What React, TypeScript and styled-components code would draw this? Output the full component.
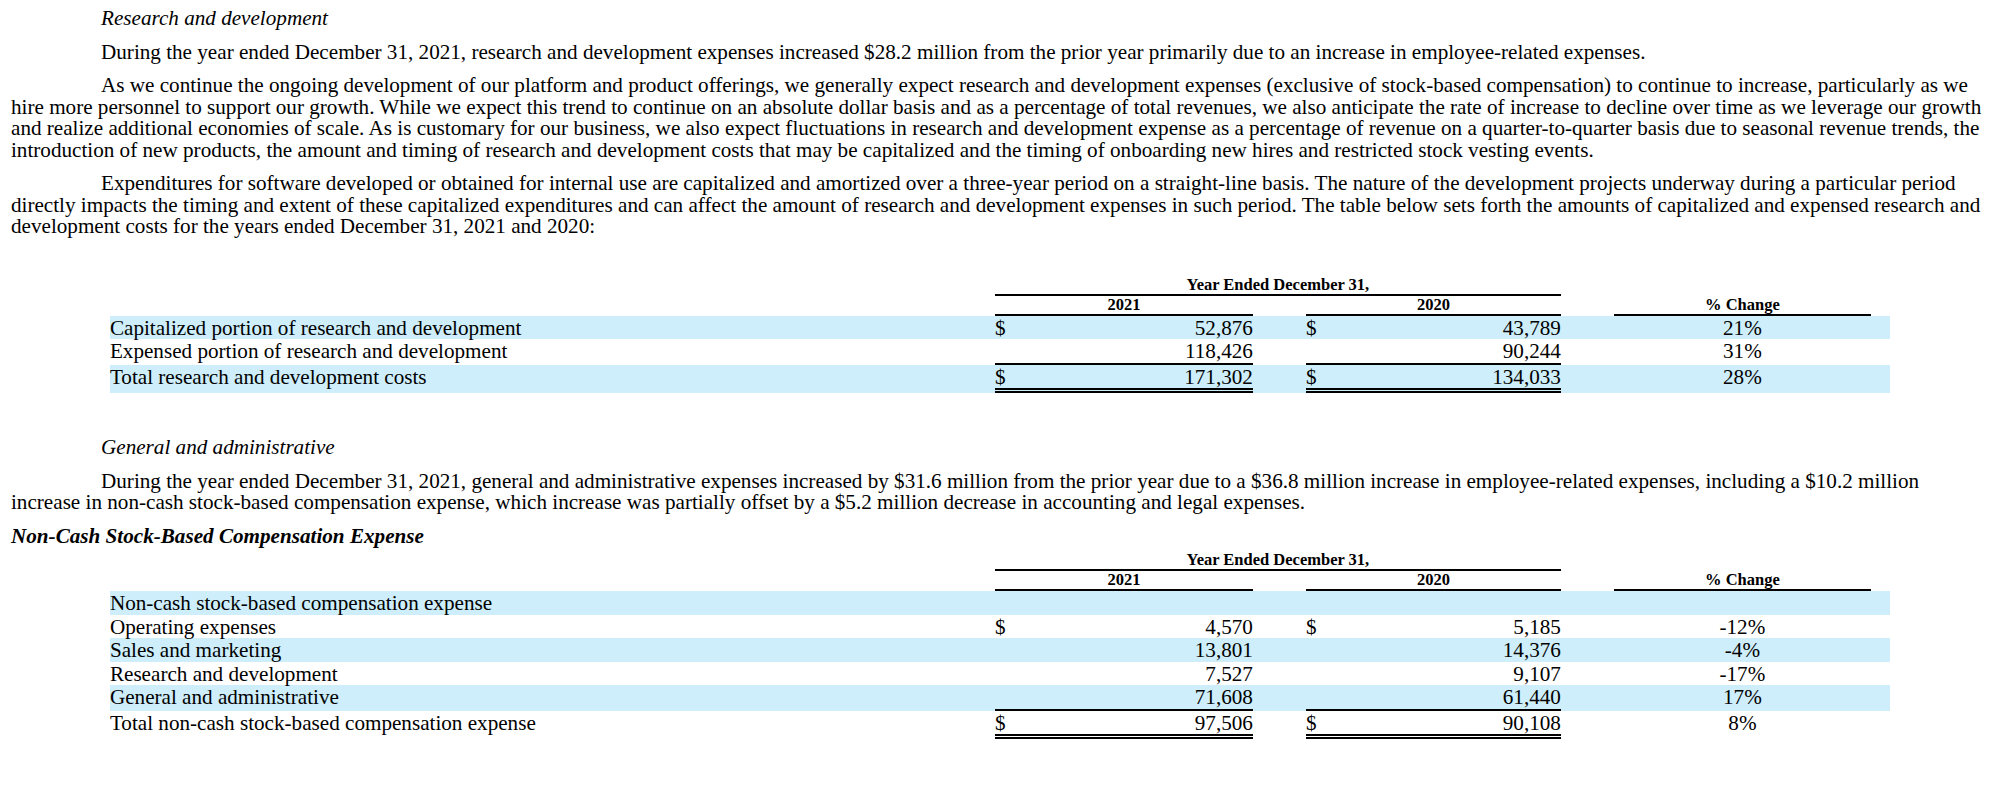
import React from 'react';
import styled, { createGlobalStyle } from 'styled-components';

const GlobalStyle = createGlobalStyle`
  html, body { margin: 0; padding: 0; background: #ffffff; }
  body { font-family: "Liberation Serif", "Times New Roman", Times, serif; color: #000000; }
  * { box-sizing: border-box; }
`;

const SHADE = '#cdeefa';
const COLS = '885px 258px 53px 255px 53px 257px 19px';
const BODY_SIZE = '21.15px';

const Page = styled.main`
  display: flex;
  flex-direction: column;
  width: 2000px;
  padding: 8px 11px 40px;
  font-size: ${BODY_SIZE};
  line-height: 21.5px;
`;

const SubHeading = styled.h3<{ $gap?: number }>`
  margin: ${(p) => p.$gap ?? 0}px 0 0;
  padding-left: 90px;
  font-size: ${BODY_SIZE};
  line-height: 21.5px;
  font-weight: normal;
  font-style: italic;
`;

const Paragraph = styled.p`
  margin: 12px 0 0;
  text-indent: 90px;
`;

const SectionTitle = styled.h2`
  margin: 12px 0 0;
  font-size: ${BODY_SIZE};
  line-height: 21.5px;
  font-weight: bold;
  font-style: italic;
`;

const Table = styled.div<{ $gap: number }>`
  width: 90%;
  align-self: center;
  margin-top: ${(p) => p.$gap}px;
`;

const Row = styled.div<{ $shaded?: boolean }>`
  display: grid;
  grid-template-columns: ${COLS};
  background: ${(p) => (p.$shaded ? SHADE : 'transparent')};
`;

const HeadCell = styled.div<{ $col: string }>`
  grid-column: ${(p) => p.$col};
  font-size: 16.5px;
  line-height: 18px;
  font-weight: bold;
  text-align: center;
  border-bottom: 2px solid #000;
`;

type Rule = 'none' | 'single' | 'double';

const ruleCss = (r: Rule) =>
  r === 'single' ? 'border-bottom: 2px solid #000;' : r === 'double' ? 'border-bottom: 5px double #000;' : '';

const Label = styled.div`
  grid-column: 1;
  padding-top: 2px;
  line-height: 21.5px;
  white-space: nowrap;
`;

const Money = styled.div<{ $col: number; $rule: Rule }>`
  grid-column: ${(p) => p.$col};
  display: flex;
  justify-content: space-between;
  padding-top: 2px;
  line-height: 21.5px;
  ${(p) => ruleCss(p.$rule)}
`;

const Pct = styled.div`
  grid-column: 6;
  padding-top: 2px;
  line-height: 21.5px;
  text-align: center;
`;

type DataRow = {
  label: string;
  a?: string;
  b?: string;
  pct?: string;
  dollar?: boolean;
  rule?: Rule;
};

const TableHead = () => (
  <>
    <Row>
      <HeadCell $col="2 / 5">Year Ended December 31,</HeadCell>
    </Row>
    <Row>
      <HeadCell $col="2">2021</HeadCell>
      <HeadCell $col="4">2020</HeadCell>
      <HeadCell $col="6">% Change</HeadCell>
    </Row>
  </>
);

const DataTable = ({ rows, gap }: { rows: DataRow[]; gap: number }) => (
  <Table $gap={gap}>
    <TableHead />
    {rows.map((r, i) => (
      <Row key={r.label} $shaded={i % 2 === 0}>
        <Label>{r.label}</Label>
        {r.a !== undefined && (
          <Money $col={2} $rule={r.rule ?? 'none'}>
            <span>{r.dollar ? '$' : ''}</span>
            <span>{r.a}</span>
          </Money>
        )}
        {r.b !== undefined && (
          <Money $col={4} $rule={r.rule ?? 'none'}>
            <span>{r.dollar ? '$' : ''}</span>
            <span>{r.b}</span>
          </Money>
        )}
        {r.pct !== undefined && <Pct>{r.pct}</Pct>}
      </Row>
    ))}
  </Table>
);

const rdRows: DataRow[] = [
  { label: 'Capitalized portion of research and development', a: '52,876', b: '43,789', pct: '21%', dollar: true },
  { label: 'Expensed portion of research and development', a: '118,426', b: '90,244', pct: '31%', rule: 'single' },
  { label: 'Total research and development costs', a: '171,302', b: '134,033', pct: '28%', dollar: true, rule: 'double' },
];

const sbcRows: DataRow[] = [
  { label: 'Non-cash stock-based compensation expense' },
  { label: 'Operating expenses', a: '4,570', b: '5,185', pct: '-12%', dollar: true },
  { label: 'Sales and marketing', a: '13,801', b: '14,376', pct: '-4%' },
  { label: 'Research and development', a: '7,527', b: '9,107', pct: '-17%' },
  { label: 'General and administrative', a: '71,608', b: '61,440', pct: '17%', rule: 'single' },
  { label: 'Total non-cash stock-based compensation expense', a: '97,506', b: '90,108', pct: '8%', dollar: true, rule: 'double' },
];

export default function App() {
  return (
    <>
      <GlobalStyle />
      <Page>
        <SubHeading>Research and development</SubHeading>
        <Paragraph>
          During the year ended December 31, 2021, research and development expenses increased $28.2 million from the prior year primarily due to an increase in employee-related expenses.
        </Paragraph>
        <Paragraph>
          As we continue the ongoing development of our platform and product offerings, we generally expect research and development expenses (exclusive of stock-based compensation) to continue to increase, particularly as we hire more personnel to support our growth. While we expect this trend to continue on an absolute dollar basis and as a percentage of total revenues, we also anticipate the rate of increase to decline over time as we leverage our growth and realize additional economies of scale. As is customary for our business, we also expect fluctuations in research and development expense as a percentage of revenue on a quarter-to-quarter basis due to seasonal revenue trends, the introduction of new products, the amount and timing of research and development costs that may be capitalized and the timing of onboarding new hires and restricted stock vesting events.
        </Paragraph>
        <Paragraph>
          Expenditures for software developed or obtained for internal use are capitalized and amortized over a three-year period on a straight-line basis. The nature of the development projects underway during a particular period directly impacts the timing and extent of these capitalized expenditures and can affect the amount of research and development expenses in such period. The table below sets forth the amounts of capitalized and expensed research and development costs for the years ended December 31, 2021 and 2020:
        </Paragraph>
        <DataTable rows={rdRows} gap={38} />
        <SubHeading $gap={44}>General and administrative</SubHeading>
        <Paragraph>
          During the year ended December 31, 2021, general and administrative expenses increased by $31.6 million from the prior year due to a $36.8 million increase in employee-related expenses, including a $10.2 million increase in non-cash stock-based compensation expense, which increase was partially offset by a $5.2 million decrease in accounting and legal expenses.
        </Paragraph>
        <SectionTitle>Non-Cash Stock-Based Compensation Expense</SectionTitle>
        <DataTable rows={sbcRows} gap={4} />
      </Page>
    </>
  );
}
